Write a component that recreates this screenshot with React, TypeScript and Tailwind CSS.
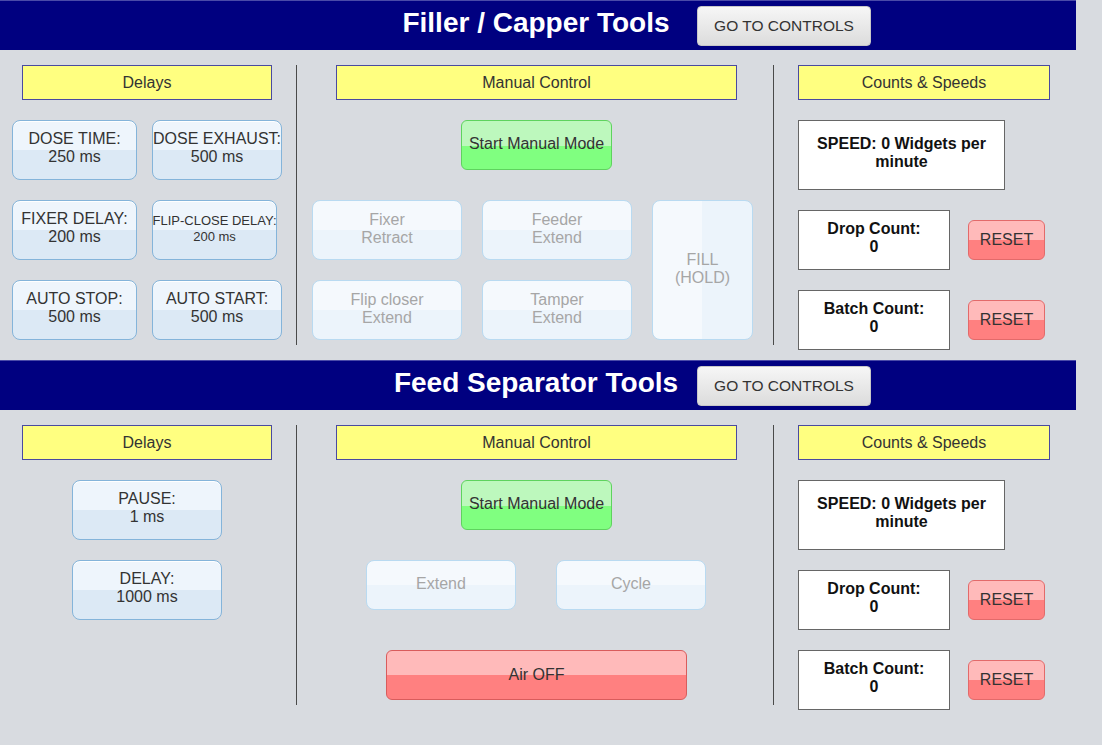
import React from 'react';

const blueBtn =
  'shrink-0 flex flex-col items-center justify-center h-[60px] pb-[4px] rounded-[8px] border border-[#84b4da] bg-[linear-gradient(to_bottom,#eef5fc_50%,#dce9f5_50%)] text-[#333] leading-[18px] shadow-[inset_0_1px_0_#ffffff]';
const offBtn =
  'flex flex-col items-center justify-center pb-[2px] rounded-[8px] border border-[#b9daf1] bg-[linear-gradient(to_bottom,#f5f9fd_50%,#ecf4fb_50%)] text-[#a6a6a6] text-[16px] leading-[18px]';
const greenBtn =
  'shrink-0 flex items-center justify-center pb-[2px] h-[50px] w-[151px] rounded-[6px] border border-[#5ed35e] bg-[linear-gradient(to_bottom,#bdf8bd_53%,#80ff80_53%)] text-[16px] text-[#333]';
const resetBtn =
  'shrink-0 flex items-center justify-center h-[40px] w-[77px] rounded-[6px] border border-[#e36a6a] bg-[linear-gradient(to_bottom,#ffbaba_50%,#ff8080_50%)] text-[16px] text-[#333]';
const yellowLabel =
  'shrink-0 h-[35px] flex items-center justify-center bg-[#ffff80] border border-[#4a4aa0] text-[16px] text-[#333]';
const countBox =
  'shrink-0 flex flex-col items-center justify-center pb-[4px] bg-white border-[1.5px] border-[#666] font-bold text-[16px] leading-[18px] text-[#111] text-center';

function Header({ title }: { title: string }) {
  return (
    <div className="h-[50px] w-[1076px] bg-[#000080] border-t border-[#4a4aa8] flex items-center">
      <div className="ml-[375px] w-[322px] pb-[5px] text-center text-white font-bold text-[28px] leading-none">
        {title}
      </div>
      <button className="h-[40px] w-[174px] rounded-[4px] border border-[#c8c8c8] bg-[linear-gradient(to_bottom,#f6f6f6,#dcdcdc)] text-[15.5px] text-[#333]">
        GO TO CONTROLS
      </button>
    </div>
  );
}

function DelayBtn({ label, value, className }: { label: string; value: string; className: string }) {
  return (
    <button className={blueBtn + ' ' + className}>
      <span className="text-[16px] whitespace-nowrap">{label}</span>
      <span className="text-[16px]">{value}</span>
    </button>
  );
}

function Counts() {
  return (
    <div className="flex-1 pl-[24px] flex flex-col">
      <div className={yellowLabel + ' w-[252px]'}>Counts &amp; Speeds</div>
      <div className={countBox + ' mt-[20px] w-[207px] h-[70px] px-[14px]'}>SPEED: 0 Widgets per minute</div>
      <div className="shrink-0 mt-[20px] flex items-center gap-[18px]">
        <div className={countBox + ' w-[152px] h-[60px]'}>
          <span>Drop Count:</span>
          <span>0</span>
        </div>
        <button className={resetBtn}>RESET</button>
      </div>
      <div className="shrink-0 mt-[20px] flex items-center gap-[18px]">
        <div className={countBox + ' w-[152px] h-[60px]'}>
          <span>Batch Count:</span>
          <span>0</span>
        </div>
        <button className={resetBtn}>RESET</button>
      </div>
    </div>
  );
}

export default function App() {
  return (
    <div className="min-h-screen w-full bg-[#d8dbe0] font-['Liberation_Sans',Arial,sans-serif]">
      <Header title="Filler / Capper Tools" />
      <div className="flex w-[1076px] h-[310px] py-[15px]">
        <div className="w-[297px] h-[280px] border-r border-[#4a4a4a] flex flex-col">
          <div className={yellowLabel + ' ml-[22px] w-[250px]'}>Delays</div>
          <div className="mt-[20px] ml-[12px] flex flex-col gap-[20px]">
            <div className="flex gap-[15px]">
              <DelayBtn label="DOSE TIME:" value="250 ms" className="w-[125px]" />
              <DelayBtn label="DOSE EXHAUST:" value="500 ms" className="w-[130px]" />
            </div>
            <div className="flex gap-[15px]">
              <DelayBtn label="FIXER DELAY:" value="200 ms" className="w-[125px]" />
              <button className={blueBtn + ' w-[125px]'}>
                <span className="text-[13px] whitespace-nowrap">FLIP-CLOSE DELAY:</span>
                <span className="text-[13px] leading-[14px]">200 ms</span>
              </button>
            </div>
            <div className="flex gap-[15px]">
              <DelayBtn label="AUTO STOP:" value="500 ms" className="w-[125px]" />
              <DelayBtn label="AUTO START:" value="500 ms" className="w-[130px]" />
            </div>
          </div>
        </div>

        <div className="w-[477px] h-[280px] border-r border-[#4a4a4a] flex flex-col">
          <div className={yellowLabel + ' ml-[39px] w-[401px]'}>Manual Control</div>
          <button className={greenBtn + ' mt-[20px] ml-[164px]'}>Start Manual Mode</button>
          <div className="mt-[30px] ml-[15px] grid grid-cols-[150px_150px_101px] grid-rows-[60px_60px] gap-x-[20px] gap-y-[20px]">
            <button className={offBtn}>
              <span>Fixer</span>
              <span>Retract</span>
            </button>
            <button className={offBtn}>
              <span>Feeder</span>
              <span>Extend</span>
            </button>
            <button className={offBtn + ' row-span-2 bg-[linear-gradient(to_right,#f5f9fd_50%,#ecf4fb_50%)]'}>
              <span>FILL</span>
              <span>(HOLD)</span>
            </button>
            <button className={offBtn}>
              <span>Flip closer</span>
              <span>Extend</span>
            </button>
            <button className={offBtn}>
              <span>Tamper</span>
              <span>Extend</span>
            </button>
          </div>
        </div>

        <Counts />
      </div>

      <Header title="Feed Separator Tools" />
      <div className="flex w-[1076px] h-[335px] pt-[15px]">
        <div className="w-[297px] h-[280px] border-r border-[#4a4a4a] flex flex-col">
          <div className={yellowLabel + ' ml-[22px] w-[250px]'}>Delays</div>
          <DelayBtn label="PAUSE:" value="1 ms" className="mt-[20px] ml-[72px] w-[150px]" />
          <DelayBtn label="DELAY:" value="1000 ms" className="mt-[20px] ml-[72px] w-[150px]" />
        </div>

        <div className="w-[477px] h-[280px] border-r border-[#4a4a4a] flex flex-col">
          <div className={yellowLabel + ' ml-[39px] w-[401px]'}>Manual Control</div>
          <button className={greenBtn + ' mt-[20px] ml-[164px]'}>Start Manual Mode</button>
          <div className="shrink-0 mt-[30px] ml-[69px] flex gap-[40px]">
            <button className={offBtn + ' w-[150px] h-[50px]'}>Extend</button>
            <button className={offBtn + ' w-[150px] h-[50px]'}>Cycle</button>
          </div>
          <button className="shrink-0 mt-[40px] ml-[89px] h-[50px] w-[301px] rounded-[6px] border border-[#d95c5c] bg-[linear-gradient(to_bottom,#ffbaba_50%,#ff8080_50%)] text-[16px] text-[#333]">
            Air OFF
          </button>
        </div>

        <Counts />
      </div>
    </div>
  );
}
